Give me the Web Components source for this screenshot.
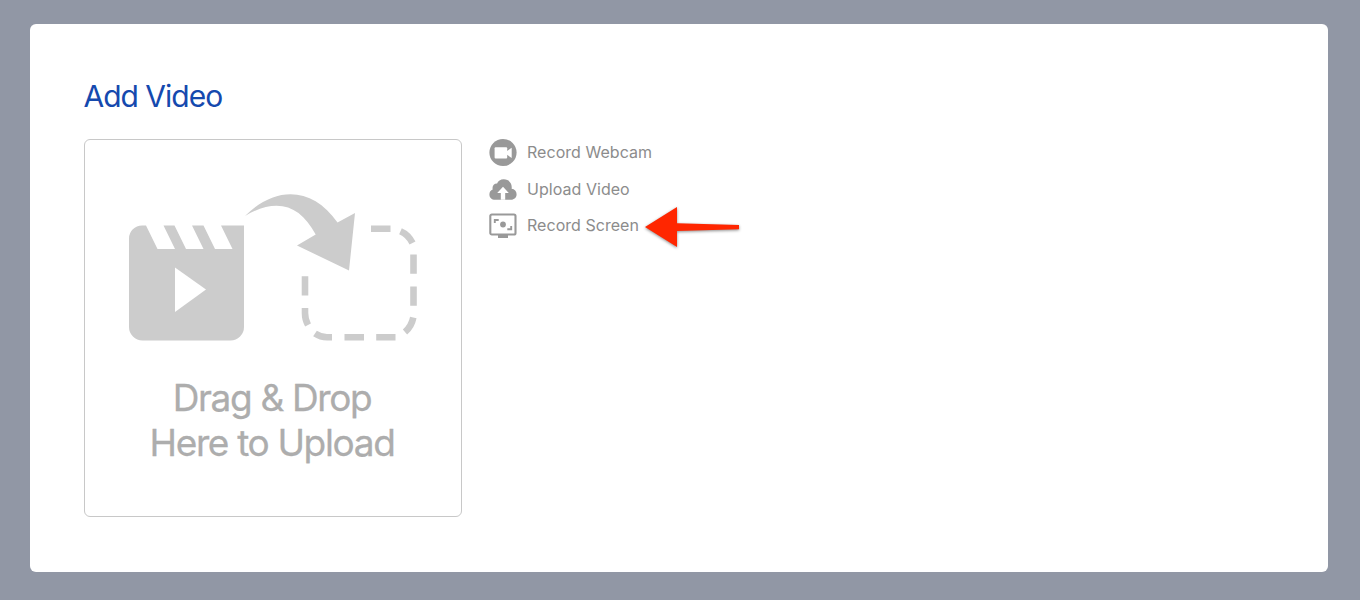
<!DOCTYPE html>
<html lang="en">
<head>
<meta charset="utf-8">
<title>Add Video</title>
<style>
  body {
    margin: 0;
    height: 600px;
    overflow: hidden;
    background: #9197a5;
    font-family: Inter, "Liberation Sans", sans-serif;
  }
</style>
</head>
<body>
<video-dialog heading="Add Video">
  <drop-zone slot="drop"></drop-zone>
  <source-item icon="webcam">Record Webcam</source-item>
  <source-item icon="upload">Upload Video</source-item>
  <source-item icon="screen">Record Screen<pointer-arrow slot="hint"></pointer-arrow></source-item>
</video-dialog>

<script>
const ICONS = {
  webcam: `
    <circle cx="14" cy="14.5" r="13.6"/>
    <rect x="5.6" y="9.2" width="12.6" height="11.2" rx="1" fill="#fff"/>
    <path d="M17.600 13.200 22.700 9.800v10.200l-5.100-3.600z" fill="#fff"/>`,
  upload: `
    <path d="M6.2 24.700C2.6 24.700.4 22.500.4 19.400c0-2.500 1.300-4.300 3.300-5-.8-3.200 1.200-5.900 4.400-5.800C9 6 11.500 4.300 14.700 4.300c4.900 0 8.200 3.500 8 8 .1.500 0 1-.1 1.400 3 .4 5 2.500 5 5.500 0 3.200-2.400 5.500-5.600 5.500z"/>
    <path d="M14 11.700 19.800 17.900h-3.600v6.900h-4.400v-6.900H8.200z" fill="#fff"/>`,
  screen: `
    <rect x="1.300" y="3.500" width="25.200" height="20" rx="1.600" fill="none" stroke="#999" stroke-width="2.100"/>
    <path d="M9 24h10v3H9z"/>
    <circle cx="14" cy="13.500" r="2.900"/>
    <path d="M5.800 12.100V9h3.900M22.200 15v3.200h-3.900" fill="none" stroke="#999" stroke-width="1.900"/>`
};

class VideoDialog extends HTMLElement {
  constructor() {
    super();
    this.attachShadow({ mode: "open" });
  }

  connectedCallback() {
    this.shadowRoot.innerHTML = `
      <style>
        :host {
          display: block;
          box-sizing: border-box;
          height: 600px;
          padding: 24px 32px 28px 30px;
        }

        .panel {
          box-sizing: border-box;
          height: 548px;
          padding: 52px 54px;
          background: #fff;
          border-radius: 6px;
        }

        h2 {
          margin: 0 0 23px;
          font-size: 30px;
          line-height: 40px;
          font-weight: 400;
          letter-spacing: -1px;
          text-indent: -0.5px;
          color: #1549ae;
        }

        .content {
          display: flex;
          align-items: flex-start;
          gap: 27px;
        }

        .sources {
          display: grid;
          grid-auto-rows: 36.5px;
          margin-top: -5px;
        }
      </style>
      <section class="panel">
        <h2>${this.getAttribute("heading")}</h2>
        <div class="content">
          <slot name="drop"></slot>
          <div class="sources"><slot></slot></div>
        </div>
      </section>
    `;
  }
}

class DropZone extends HTMLElement {
  constructor() {
    super();
    this.attachShadow({ mode: "open" });
  }

  connectedCallback() {
    this.shadowRoot.innerHTML = `
      <style>
        :host {
          display: flex;
          flex-direction: column;
          align-items: center;
          box-sizing: border-box;
          width: 378px;
          height: 378px;
          padding-top: 50px;
          border: 1px solid #c8c8c8;
          border-radius: 6px;
        }

        svg {
          display: block;
          fill: #ccc;
        }

        p {
          margin: 30px 2px 0 0;
          font-size: 37px;
          line-height: 45px;
          letter-spacing: -1.35px;
          text-align: center;
          color: #adadad;
          -webkit-text-stroke: 0.3px #adadad;
        }
      </style>
      <svg width="298" height="155" viewBox="124 190 298 155">
        <!-- clapper board -->
        <path d="M142 225.500h4l11.500 23.500h17.500l-11.500-23.500h11l11.500 23.500h17.500l-11.500-23.500h11.500l11.500 23.500h17.500l-11.500-23.500H244V327a13.500 13.500 0 0 1-13.500 13.500H142.500A13.500 13.500 0 0 1 129 327V238.500a13 13 0 0 1 13-13z"/>
        <path d="M175 267.500 206 289.500 175 312z" fill="#fff"/>
        <!-- arrow into the target -->
        <path d="M245 216C276 185 313 187 337.500 222.500L355 213 349 270.500 297 245.500 315.700 234.500C300 205 277 197 245 216z"/>
        <!-- dashed target -->
        <path d="M371 228.800h19.500M400.500 231.200Q408.500 234.700 412.500 243M413.500 254.500v19.200M413.500 286.500v19.200M413.300 317.500Q411.500 326.500 405 332M395.500 337.200h-19.300M364 337.200h-19.500M332 337.200h-5Q320.500 337.200 315 333.500M308 325Q305 319.500 305 313v-5M305 295.500v-19.300" fill="none" stroke="#ccc" stroke-width="6.600"/>
      </svg>
      <p>Drag &amp; Drop<br>Here to Upload</p>
    `;
  }
}

class SourceItem extends HTMLElement {
  constructor() {
    super();
    this.attachShadow({ mode: "open" });
  }

  connectedCallback() {
    this.shadowRoot.innerHTML = `
      <style>
        :host {
          display: flex;
          align-items: center;
          font-size: 16px;
          line-height: 20px;
          letter-spacing: 0.04px;
          color: #8c8c8c;
          white-space: nowrap;
        }

        svg {
          flex: none;
          margin-right: 10px;
          overflow: visible;
          fill: #999;
        }
      </style>
      <svg width="28" height="28" viewBox="0 0 28 28">${ICONS[this.getAttribute("icon")]}</svg>
      <span><slot></slot></span>
      <slot name="hint"></slot>
    `;
  }
}

class PointerArrow extends HTMLElement {
  constructor() {
    super();
    this.attachShadow({ mode: "open" });
  }

  connectedCallback() {
    this.shadowRoot.innerHTML = `
      <style>
        :host {
          display: block;
          height: 44px;
          margin: 0 0 -3px 3px;
        }

        svg {
          display: block;
          overflow: visible;
          fill: #ff2600;
          filter: drop-shadow(0 1px 1.5px rgba(0, 0, 0, 0.45));
        }
      </style>
      <svg width="100" height="44" viewBox="642 205 100 44">
        <path d="M645 227 677 207V223.200L739 225V229.300L677 231V247z"/>
      </svg>
    `;
  }
}

customElements.define("video-dialog", VideoDialog);
customElements.define("drop-zone", DropZone);
customElements.define("source-item", SourceItem);
customElements.define("pointer-arrow", PointerArrow);
</script>
</body>
</html>
